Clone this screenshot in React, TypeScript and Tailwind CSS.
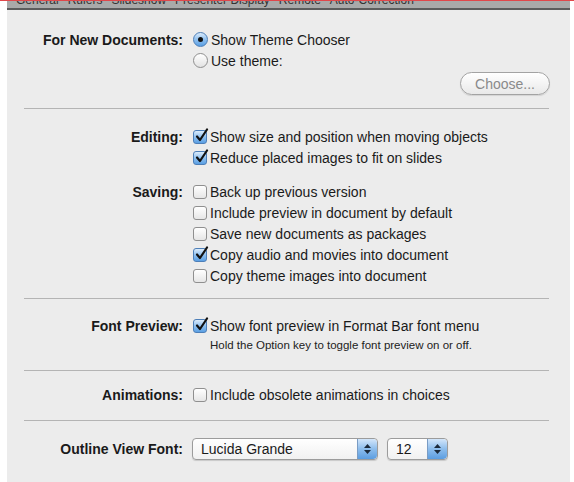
import React from 'react';

const FONT = { fontFamily: '"Lucida Grande", "Liberation Sans", Arial, sans-serif' };

function Check({ on }: { on?: boolean }) {
  return (
    <span
      className={`relative inline-block w-[14px] h-[14px] shrink-0 rounded-[3px] border ${
        on
          ? 'border-[#4d7fb8] bg-gradient-to-b from-[#dcecfb] via-[#8fc0ef] to-[#5a9fe3]'
          : 'border-[#8f8f8f] bg-gradient-to-b from-white to-[#e6e6e6]'
      }`}
    >
      {on && (
        <svg className="absolute -top-[3px] left-[1px]" width="14" height="15" viewBox="0 0 14 15">
          <path d="M2 8.5 L5 12 L12 1.5" fill="none" stroke="#111" strokeWidth="2.2" strokeLinecap="round" strokeLinejoin="round" />
        </svg>
      )}
    </span>
  );
}

function Radio({ on }: { on?: boolean }) {
  return (
    <span
      className={`flex items-center justify-center w-[15px] h-[15px] shrink-0 rounded-full border ${
        on
          ? 'border-[#4d7fb8] bg-gradient-to-b from-[#dcecfb] via-[#8fc0ef] to-[#5a9fe3]'
          : 'border-[#8f8f8f] bg-gradient-to-b from-white to-[#e3e3e3]'
      }`}
    >
      {on && <span className="w-[5px] h-[5px] rounded-full bg-[#111]" />}
    </span>
  );
}

function Row({ label, children }: { label?: string; children: React.ReactNode }) {
  return (
    <div className="flex items-center h-[21px]">
      <div className="w-[186px] pr-[10px] text-right font-bold text-[#1a1a1a] whitespace-nowrap">{label}</div>
      <div className="flex items-center gap-[3px] whitespace-nowrap text-[#1a1a1a]">{children}</div>
    </div>
  );
}

function Sep() {
  return <div className="ml-[17px] mr-[21px] h-px bg-[#b4b4b4]" />;
}

function Stepper() {
  return (
    <span className="flex flex-col items-center justify-center gap-[2px] w-[20px] h-full border-l border-[#7a9cc4] bg-gradient-to-b from-[#d3e6fa] via-[#8dbdec] to-[#5b9de0] rounded-r-[4px]">
      <svg width="7" height="4" viewBox="0 0 7 4"><path d="M0 4 L3.5 0 L7 4Z" fill="#1c2a3a" /></svg>
      <svg width="7" height="4" viewBox="0 0 7 4"><path d="M0 0 L3.5 4 L7 0Z" fill="#1c2a3a" /></svg>
    </span>
  );
}

function Popup({ text, w }: { text: string; w: string }) {
  return (
    <div className={`flex items-center h-[22px] ${w} rounded-[4px] border border-[#9c9c9c] bg-gradient-to-b from-white to-[#f1f1f1] shadow-[0_1px_1px_rgba(0,0,0,0.15)] overflow-hidden`}>
      <span className="flex-1 pl-[8px] text-[#1a1a1a]">{text}</span>
      <Stepper />
    </div>
  );
}

export default function App() {
  return (
    <div className="min-h-screen flex flex-col bg-white text-[14px] leading-none" style={FONT}>
      <div className="h-px bg-[#e0474b]" />
      <div className="ml-[7px] w-[563px] flex-1 flex flex-col">
        {/* cut-off toolbar tabs */}
        <div className="h-[9px] overflow-hidden bg-[#a9a9a9] border-b-2 border-[#5c5c5c]">
          <div className="-mt-[7px] pl-[9px] flex gap-[9px] text-[12px] text-[#333] whitespace-nowrap">
            <span>General</span>
            <span>Rulers</span>
            <span>Slideshow</span>
            <span>Presenter Display</span>
            <span>Remote</span>
            <span>Auto-Correction</span>
          </div>
        </div>

        <div className="flex-1 bg-[#ececec]">
          <div className="pt-[19px]">
            <Row label="For New Documents:">
              <Radio on />
              <span>Show Theme Chooser</span>
            </Row>
            <Row>
              <Radio />
              <span>Use theme:</span>
            </Row>
            <div className="flex justify-end pr-[20px] pt-[1px]">
              <button className="w-[90px] h-[23px] rounded-full border border-[#a3a3a3] bg-gradient-to-b from-white to-[#e9e9e9] text-[#8a8a8a] shadow-[0_1px_1px_rgba(0,0,0,0.1)]">
                Choose...
              </button>
            </div>
          </div>

          <div className="pt-[13px]"><Sep /></div>

          <div className="pt-[17px]">
            <Row label="Editing:">
              <Check on />
              <span>Show size and position when moving objects</span>
            </Row>
            <Row>
              <Check on />
              <span>Reduce placed images to fit on slides</span>
            </Row>
          </div>

          <div className="pt-[13px]">
            <Row label="Saving:">
              <Check />
              <span>Back up previous version</span>
            </Row>
            <Row>
              <Check />
              <span>Include preview in document by default</span>
            </Row>
            <Row>
              <Check />
              <span>Save new documents as packages</span>
            </Row>
            <Row>
              <Check on />
              <span>Copy audio and movies into document</span>
            </Row>
            <Row>
              <Check />
              <span>Copy theme images into document</span>
            </Row>
          </div>

          <div className="pt-[12px]"><Sep /></div>

          <div className="pt-[16px]">
            <Row label="Font Preview:">
              <Check on />
              <span>Show font preview in Format Bar font menu</span>
            </Row>
            <div className="pl-[203px] pt-[4px] text-[11.5px] text-[#222] whitespace-nowrap">
              Hold the Option key to toggle font preview on or off.
            </div>
          </div>

          <div className="pt-[18px]"><Sep /></div>

          <div className="pt-[14px]">
            <Row label="Animations:">
              <Check />
              <span>Include obsolete animations in choices</span>
            </Row>
          </div>

          <div className="pt-[14px]"><Sep /></div>

          <div className="pt-[17px] flex items-center">
            <div className="w-[185px] pr-[9px] text-right font-bold text-[#1a1a1a] whitespace-nowrap">Outline View Font:</div>
            <Popup text="Lucida Grande" w="w-[186px]" />
            <div className="w-[9px]" />
            <Popup text="12" w="w-[61px]" />
          </div>
        </div>
      </div>
    </div>
  );
}
